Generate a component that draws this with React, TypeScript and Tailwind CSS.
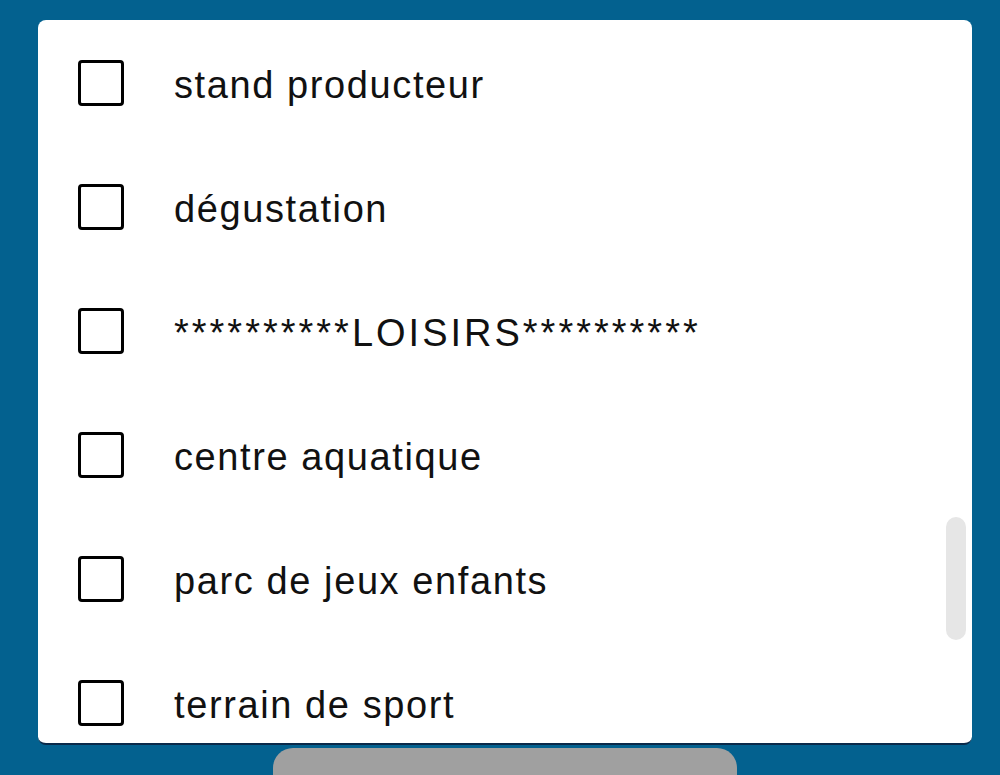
const items = [
  { label: 'stand producteur', wide: false },
  { label: 'dégustation', wide: false },
  { label: '**********LOISIRS**********', wide: true },
  { label: 'centre aquatique', wide: false },
  { label: 'parc de jeux enfants', wide: false },
  { label: 'terrain de sport', wide: false },
]

function Row({ label, wide }: { label: string; wide: boolean }) {
  return (
    <div className="flex items-center h-[124px] shrink-0">
      <span className="w-[46px] h-[46px] ml-[40px] border-[3px] border-black rounded-[4px] shrink-0" />
      <span className={`ml-[50px] mt-[4px] text-[38px] text-[#111] leading-none ${wide ? 'tracking-[3px]' : 'tracking-[1.6px]'}`}>
        {label}
      </span>
    </div>
  )
}

export default function App() {
  return (
    <div className="w-[1000px] h-[775px] bg-[#03618f] overflow-hidden flex flex-col items-center" style={{ fontFamily: '"Liberation Sans", sans-serif' }}>
      <div className="relative mt-[20px] ml-[10px] w-[934px] h-[725px] shrink-0 bg-white rounded-[8px] border-b-2 border-[#0a2a4a] overflow-hidden flex flex-col">
        <div className="flex flex-col mt-[1px]">
          {items.map(i => <Row key={i.label} label={i.label} wide={i.wide} />)}
        </div>
        <div className="absolute right-[6px] top-[497px] w-[20px] h-[123px] rounded-full bg-[#e6e6e6]" />
      </div>
      <div className="mt-[3px] ml-[10px] w-[464px] h-[40px] shrink-0 bg-[#a0a0a0] rounded-t-[20px]" />
    </div>
  )
}
